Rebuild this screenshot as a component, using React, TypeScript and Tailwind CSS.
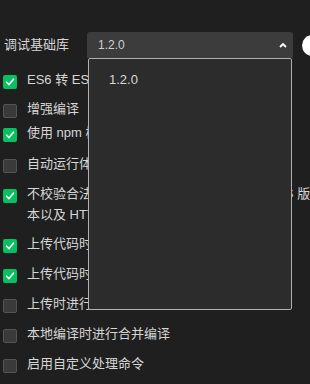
import React from "react";

const font = { fontFamily: '"Liberation Sans", "Noto Sans CJK SC", sans-serif' };

function Box({ checked }: { checked: boolean }) {
  if (checked) {
    return (
      <div className="w-[14px] h-[14px] shrink-0 rounded-[2px] bg-[#07c160] flex items-center justify-center">
        <svg width="10" height="10" viewBox="0 0 10 10">
          <path d="M1.6 5.2 L4 7.6 L8.5 2.2" fill="none" stroke="#fff" strokeWidth="1.6" strokeLinecap="round" strokeLinejoin="round" />
        </svg>
      </div>
    );
  }
  return <div className="w-[14px] h-[14px] shrink-0 rounded-[2px] bg-[#3a3a3a] border border-[#555]" />;
}

const rows: { c: boolean; t: string[]; h: string }[] = [
  { c: true, t: ["ES6 转 ES5"], h: "h-[29px]" },
  { c: false, t: ["增强编译"], h: "h-[24px]" },
  { c: true, t: ["使用 npm 模块"], h: "h-[31px]" },
  { c: false, t: ["自动运行体验评分"], h: "h-[30px]" },
  { c: true, t: ["不校验合法域名、web-view（业务域名）、TLS 版", "本以及 HTTPS 证书"], h: "h-[50px]" },
  { c: true, t: ["上传代码时样式自动补全"], h: "h-[30px]" },
  { c: true, t: ["上传代码时自动压缩混淆"], h: "h-[30px]" },
  { c: false, t: ["上传时进行代码保护"], h: "h-[30px]" },
  { c: false, t: ["本地编译时进行合并编译"], h: "h-[30px]" },
  { c: false, t: ["启用自定义处理命令"], h: "h-[30px]" },
];

export default function App() {
  return (
    <div className="w-[310px] h-[384px] bg-[#1f1f1f] relative overflow-hidden text-[#d6d6d6]" style={font}>
      <div className="flex items-center pt-[32px] h-[58px]">
        <div className="w-[87px] shrink-0 pl-[4px] text-[13px]">调试基础库</div>
        <div className="w-[206px] shrink-0 h-[26px] bg-[#3c3c3c] rounded-t-[3px] flex items-center justify-between pl-[11px] pr-[6px] text-[12px] text-[#cfcfcf]">
          <span>1.2.0</span>
          <svg width="8" height="6" viewBox="0 0 8 6">
            <path d="M1 5 L4 2 L7 5" fill="none" stroke="#fff" strokeWidth="1.8" />
          </svg>
        </div>
        <div className="ml-[9px] w-[21px] h-[21px] rounded-full bg-white shrink-0" />
      </div>
      <div className="flex flex-col pt-[9px] pl-[3px] text-[13px]">
        {rows.map((r, i) => (
          <div key={i} className={`flex items-start gap-[10px] ${r.h} pt-[8px]`}>
            <Box checked={r.c} />
            <div className="flex flex-col leading-[21px] -mt-[6px] whitespace-nowrap">
              {r.t.map((l, j) => (
                <span key={j}>{l}</span>
              ))}
            </div>
          </div>
        ))}
      </div>
      <div className="absolute left-[88px] top-[58px] w-[204px] h-[252px] bg-[#2c2c2c] border border-[#b0b0b0] rounded-[2px]">
        <div className="pl-[20px] pt-[11px] text-[13px] text-[#d8d8d8]">1.2.0</div>
      </div>
    </div>
  );
}
